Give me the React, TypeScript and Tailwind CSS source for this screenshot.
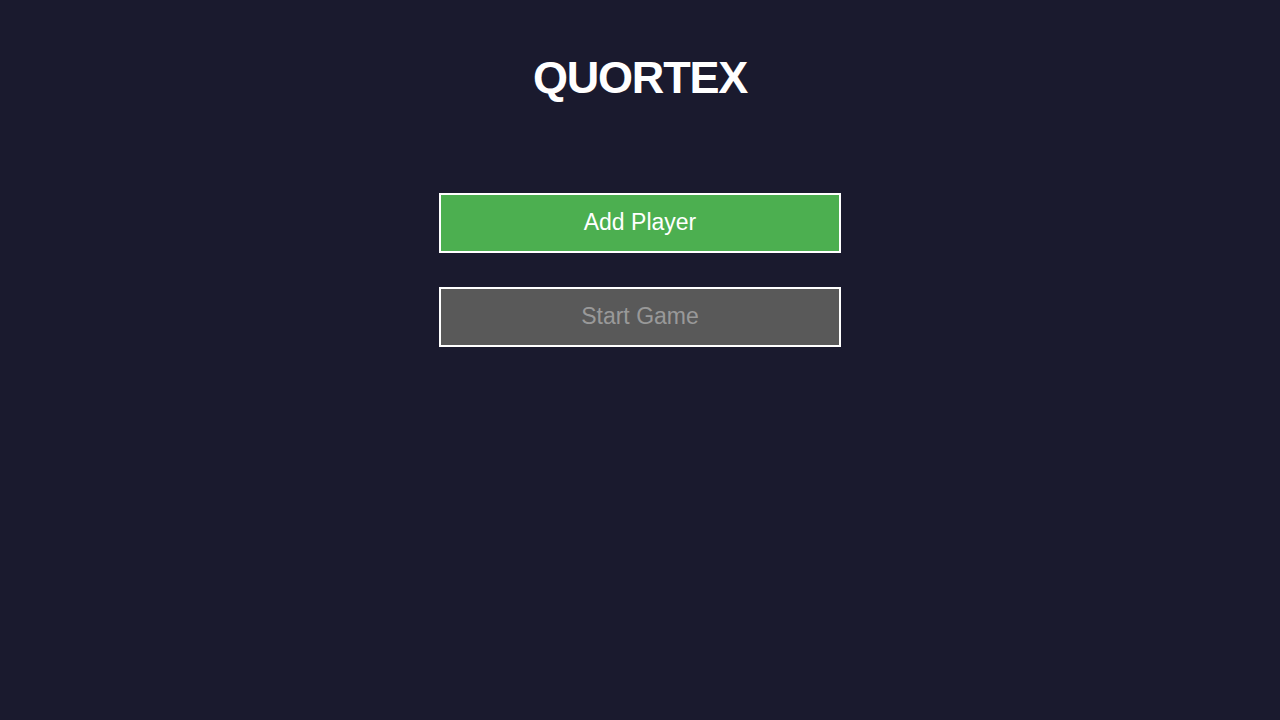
import React from "react";

export default function App() {
  return (
    <div
      className="min-h-[720px] w-full bg-[#1a1a2e] flex flex-col items-center"
      style={{ fontFamily: '"Liberation Sans", Arial, Helvetica, sans-serif' }}
    >
      <h1 className="mt-[50px] text-[45px] leading-[56px] font-bold text-white tracking-[-1.2px]">
        QUORTEX
      </h1>
      <div className="mt-[87px] flex flex-col gap-[34px]">
        <button className="w-[402px] h-[60px] pb-[2px] bg-[#4caf50] border-2 border-white text-white text-[23px]">
          Add Player
        </button>
        <button
          disabled
          className="w-[402px] h-[60px] pb-[2px] bg-[#595959] border-2 border-white text-[#999999] text-[23px]"
        >
          Start Game
        </button>
      </div>
    </div>
  );
}
